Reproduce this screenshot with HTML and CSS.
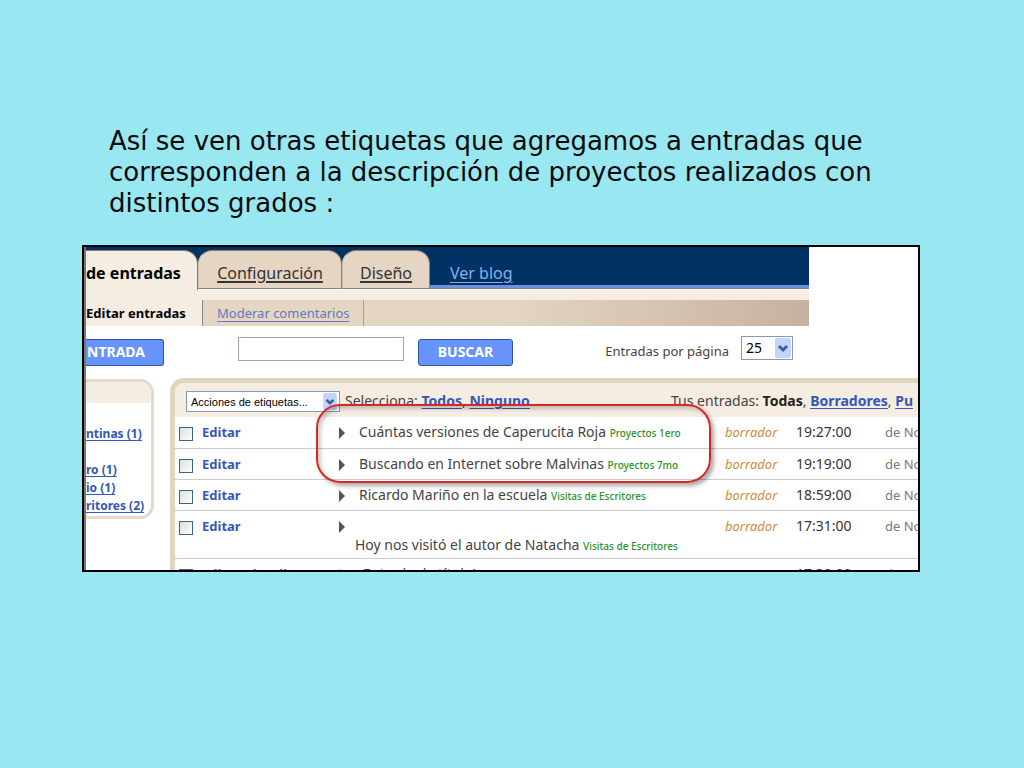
FILE: index.html
```html
<!DOCTYPE html>
<html lang="es">
<head>
<meta charset="utf-8">
<title>Etiquetas en entradas</title>
<link rel="stylesheet" href="styles.css">
</head>
<body>
<main class="slide">
  <p class="intro">Así se ven otras etiquetas que agregamos a entradas que corresponden a la descripción de proyectos realizados con distintos grados :</p>
  <section class="frame">
    <header class="header">
      <nav class="tabs">
        <a class="tab tab-active" href="#">de entradas</a>
        <a class="tab tab-config" href="#"><span>Configuración</span></a>
        <a class="tab tab-design" href="#"><span>Diseño</span></a>
        <a class="view-blog" href="#">Ver blog</a>
      </nav>
      <nav class="subtabs">
        <a class="subtab-active" href="#">Editar entradas</a>
        <div class="subtab-rest"><a class="subtab" href="#"><span>Moderar comentarios</span></a></div>
      </nav>
    </header>
    <form class="toolbar">
      <button class="btn btn-new" type="button">NTRADA</button>
      <input class="search" type="text" aria-label="Buscar entradas">
      <button class="btn btn-search" type="button">BUSCAR</button>
      <label class="per-page" for="per-page">Entradas por página</label>
      <span class="pick pick-count"><select id="per-page"><option>25</option></select><svg class="arrow" viewBox="0 0 16 20"><rect width="16" height="20" rx="2"/><path d="M4 8l4 4 4-4"/></svg></span>
    </form>
    <div class="content">
      <aside class="labels">
        <div class="labels-head"></div>
        <ul>
          <li class="spaced"><a href="#">ntinas (1)</a></li>
          <li><a href="#">ro (1)</a></li>
          <li><a href="#">io (1)</a></li>
          <li><a href="#">ritores (2)</a></li>
        </ul>
      </aside>
      <section class="posts">
        <div class="posts-bar">
          <span class="pick pick-actions"><select aria-label="Acciones de etiquetas"><option>Acciones de etiquetas...</option></select><svg class="arrow" viewBox="0 0 16 20"><rect width="16" height="20" rx="2"/><path d="M4 8l4 4 4-4"/></svg></span>
          <span class="select-links">Selecciona: <a href="#">Todos</a>, <a href="#">Ninguno</a></span>
          <span class="filters">Tus entradas: <b>Todas</b>, <a href="#">Borradores</a>, <a href="#">Pu</a></span>
        </div>
        <table class="list">
          <colgroup><col class="c-check"><col class="c-edit"><col class="c-title"><col class="c-state"><col class="c-time"><col class="c-date"></colgroup>
          <tbody>
            <tr><td><input type="checkbox" aria-label="Cuántas versiones"></td><td><a href="#">Editar</a></td><td><i class="tri"></i>Cuántas versiones de Caperucita Roja <small>Proyectos 1ero</small></td><td class="state">borrador</td><td class="time">19:27:00</td><td class="date">de No</td></tr>
            <tr><td><input type="checkbox" aria-label="Buscando en Internet"></td><td><a href="#">Editar</a></td><td><i class="tri"></i>Buscando en Internet sobre Malvinas <small>Proyectos 7mo</small></td><td class="state">borrador</td><td class="time">19:19:00</td><td class="date">de No</td></tr>
            <tr><td><input type="checkbox" aria-label="Ricardo Mariño"></td><td><a href="#">Editar</a></td><td><i class="tri"></i>Ricardo Mariño en la escuela <small>Visitas de Escritores</small></td><td class="state">borrador</td><td class="time">18:59:00</td><td class="date">de No</td></tr>
            <tr class="tall"><td><input type="checkbox" aria-label="Hoy nos visitó"></td><td><a href="#">Editar</a></td><td><i class="tri"></i><div class="second">Hoy nos visitó el autor de Natacha <small>Visitas de Escritores</small></div></td><td class="state">borrador</td><td class="time">17:31:00</td><td class="date">de No</td></tr>
            <tr><td><input type="checkbox" aria-label="Entrada"></td><td><a href="#">Editar</a> <a href="#">Visualizar</a></td><td><i class="tri"></i>¡Entrada de título!</td><td></td><td class="time">17:30:00</td><td class="date">de No</td></tr>
          </tbody>
        </table>
        <div class="callout"></div>
      </section>
    </div>
  </section>
</main>
</body>
</html>
```
FILE: styles.css
```css
* { box-sizing: border-box; }
body {
  margin: 0;
  min-height: 100vh;
  background: #98e7f1;
  color: #444;
  font: 14px/18px "Noto Sans", sans-serif;
}
.slide { padding: 126px 104px 0 82px; }
.intro {
  margin: 0 26px 26px 27px;
  color: #0a0a0a;
  font: 26px/31px "DejaVu Sans", Verdana, sans-serif;
}
.frame {
  border: 2px solid #000;
  background: #fff;
  box-shadow: inset 2px 0 #777;
  padding-left: 2px;
  overflow: hidden;
}
.header { margin-right: 109px; }
.tabs {
  display: flex;
  height: 43px;
  padding-top: 3px;
  background: linear-gradient(#003265 38px, #6f8fdb 38px, #6f8fdb 41px, #8b7d70 41px, #8b7d70 42px, #fff 42px);
}
.tab {
  display: flex;
  justify-content: center;
  padding-top: 13px;
  height: 39px;
  border-radius: 14px 14px 0 0;
  background: #e4d6c3;
  border: 1px solid #8b7d70;
  border-left-color: #cbbfae;
  color: #333;
  font-size: 16px;
  white-space: nowrap;
}
.tab span { text-decoration: underline; text-underline-offset: 3px; }
.tab-active {
  width: 112px;
  height: 40px;
  justify-content: flex-start;
  border-radius: 0 14px 0 0;
  border-width: 1px 1px 0 0;
  background: #f5ede1;
  color: #000;
  font-weight: bold;
  text-decoration: none;
}
.tab-config { width: 144px; }
.tab-design { width: 88px; }
.view-blog { margin: 14px 0 0 20px; color: #86b0ea; font-size: 16px; text-underline-offset: 3px; }
.subtabs { display: flex; height: 36px; background: #f5ede1; }
.subtab-active {
  width: 116px;
  padding-top: 14px;
  color: #000;
  font-size: 13px;
  font-weight: bold;
  text-decoration: none;
  white-space: nowrap;
}
.subtab-rest {
  flex: 1;
  margin-top: 10px;
  border-left: 1px solid #888;
  background: linear-gradient(90deg, #e4d6c3 50%, #c5b29e);
}
.subtab {
  display: block;
  width: 161px;
  height: 26px;
  padding: 4px 0 0 14px;
  border-right: 1px solid #aaa092;
  color: #6478bd;
  font-size: 13px;
  white-space: nowrap;
  text-underline-offset: 3px;
}
.toolbar {
  display: flex;
  align-items: center;
  height: 52px;
  padding-right: 125px;
}
.btn {
  height: 27px;
  padding: 0;
  border: 1px solid #3353a0;
  border-radius: 3px;
  background: #6794fa;
  color: #fff;
  font: bold 14px/18px "Noto Sans", sans-serif;
}
.btn-new { width: 78px; border-left: 0; border-radius: 0 3px 3px 0; padding-right: 17px; }
.search { width: 166px; height: 24px; margin: 0 14px 6px 74px; border: 1px solid #98a8b6; }
.btn-search { width: 95px; }
.per-page { margin: 0 12px 3px auto; font-size: 13px; }
.pick { position: relative; display: inline-block; border: 1px solid #7f9db9; background: #fff; }
.pick select {
  width: 100%;
  height: 100%;
  padding: 0 4px;
  border: 0;
  appearance: none;
  background: none;
  color: #000;
  font: 11px/18px "Liberation Sans", Arial, sans-serif;
}
.arrow { position: absolute; top: 1px; right: 1px; bottom: 1px; width: 16px; height: calc(100% - 2px); pointer-events: none; }
.arrow rect { fill: #c3d3fb; }
.arrow path { fill: none; stroke: #405d94; stroke-width: 3; }
.pick-count { width: 52px; height: 24px; margin-bottom: 9px; }
.pick-count select { font: 14px/20px "Noto Sans", sans-serif; }
.content { display: flex; align-items: flex-start; height: 192px; }
.labels {
  width: 68px;
  height: 140px;
  margin: 1px 16px 0 0;
  border: 3px solid #e4dacb;
  border-left: 0;
  border-radius: 0 14px 14px 0;
  overflow: hidden;
}
.labels-head { height: 21px; background: #f5ece2; }
.labels ul { margin: 0; padding: 22px 0 0; list-style: none; white-space: nowrap; font-size: 12px; font-weight: bold; }
.spaced { margin-bottom: 18px; }
a { color: #3557b7; text-underline-offset: 2px; }
.posts {
  position: relative;
  flex: 1;
  min-width: 0;
  border: solid #e0d4c2;
  border-width: 5px 0 0 5px;
  border-radius: 14px 0 0 0;
}
.posts-bar {
  display: flex;
  align-items: center;
  height: 34px;
  padding: 2px 0 0 11px;
  border-radius: 9px 0 0 0;
  background: #f5ece2;
  white-space: nowrap;
}
.posts-bar a { font-weight: bold; }
.posts-bar b { color: #222; }
.pick-actions { width: 154px; height: 21px; }
.pick-actions select { font-size: 11px; }
.select-links { margin-left: 5px; }
.filters { width: 247px; margin-left: auto; }
.list { width: 100%; table-layout: fixed; border-collapse: collapse; }
.c-check { width: 27px; }
.c-edit { width: 135px; }
.c-state { width: 71px; }
.c-time { width: 89px; }
.c-date { width: 33px; }
.list td {
  height: 31px;
  padding: 6px 0 0;
  border-bottom: 1px solid #ccc;
  vertical-align: top;
  white-space: nowrap;
}
.list .tall td { height: 48px; }
.list a { font-size: 13px; font-weight: bold; text-decoration: none; }
.list input {
  display: block;
  width: 14px;
  height: 14px;
  margin: 4px 0 0 4px;
  appearance: none;
  border: 1px solid #40637f;
  background: linear-gradient(135deg, #d8dedf, #fff);
}
.list small { color: #2a932d; font-size: 10px; font-weight: 500; }
.tri {
  display: inline-block;
  margin: 0 14px 0 2px;
  border: solid transparent;
  border-width: 6px 0 6px 6px;
  border-left-color: #555;
  vertical-align: -2px;
}
.second { padding-left: 18px; margin-top: 1px; }
.state { color: #d08a3c; font-size: 13px; font-style: italic; }
.time { color: #333; }
.date { color: #777; font-size: 13px; overflow: hidden; }
.callout {
  position: absolute;
  top: 21px;
  left: 141px;
  width: 395px;
  height: 79px;
  border: 2px solid #d62828;
  border-radius: 24px;
  box-shadow: 3px 3px 4px #0005, inset 3px 3px 4px #0003;
  pointer-events: none;
}
```
